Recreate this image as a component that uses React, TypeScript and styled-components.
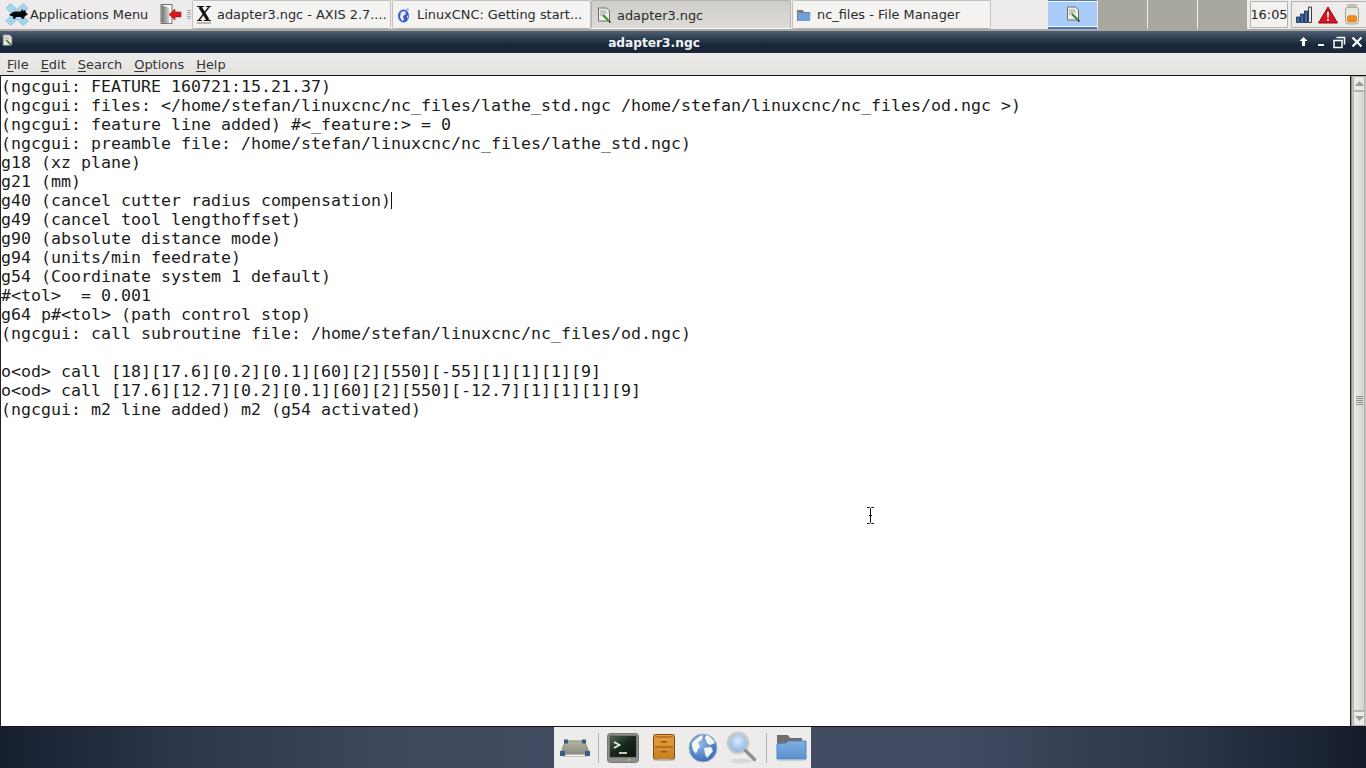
import React from 'react';
import styled, { createGlobalStyle } from 'styled-components';

const Global = createGlobalStyle`
  html, body { margin: 0; padding: 0; overflow: hidden; background: #1b2a40; }
  #root { width: 1366px; height: 768px; }
  * { box-sizing: border-box; }
`;
const Screen = styled.div`
  width: 1366px; height: 768px; display: flex; flex-direction: column;
  font-family: "DejaVu Sans", sans-serif; font-size: 12.9px; color: #2a2a2a;
`;
const Panel = styled.div`
  height: 31px; flex: none; display: flex; align-items: stretch; background: #edeceb;
  border-bottom: 2px solid #a9a8a2; padding-bottom: 1px;
`;
const AppMenu = styled.div`
  width: 157px; flex: none; display: flex; align-items: center; gap: 1px; padding-left: 5px;
`;
const Launcher = styled.div`
  width: 28px; flex: none; display: flex; align-items: center; justify-content: center;
`;
const Handle = styled.div`
  width: 7px; flex: none; display: flex; flex-direction: column; gap: 1px; justify-content: center; align-items: center;
  i { display: block; width: 4px; height: 1px; background: #a9a8a2; }
`;
const Task = styled.div<{ $w: number; $active?: boolean }>`
  width: ${p => p.$w}px; height: 29px; flex: none; display: flex; align-items: center; gap: 5px;
  padding-left: ${p => (p.$active ? 4 : 3)}px; padding-top: ${p => (p.$active ? 1 : 0)}px;
  border: 1px solid ${p => (p.$active ? '#b4b3ad' : '#c2c1bc')};
  border-bottom-color: ${p => (p.$active ? '#fff' : '#b4b3ad')};
  border-radius: 2px;
  background: ${p => (p.$active ? 'linear-gradient(#cfcecb, #dcdbd8)' : '#f4f3f2')};
  white-space: nowrap; overflow: hidden;
  svg { flex: none; }
`;
const Spacer = styled.div<{ $w: number }>` width: ${p => p.$w}px; flex: none; `;
const Pager = styled.div` display: flex; height: 29px; gap: 1px; flex: none; `;
const Desk = styled.div<{ $on?: boolean }>`
  width: 49px; height: 29px; display: flex; align-items: center; justify-content: center;
  background: ${p => (p.$on ? '#a8cbf8' : '#a9a8a0')};
  ${p => p.$on ? 'border-top: 1px solid #4a7bc0; border-bottom: 2px solid #3f76bf; box-shadow: inset 0 1px #fff, inset 0 -1px #fff;' : ''}
`;
const Clock = styled.div`
  width: 38px; height: 27px; margin: 1px 0 0 3px; flex: none; display: flex; align-items: center; justify-content: center;
  border: 1px solid #b4b3ad; background: #f2f1f0; color: #222;
`;
const Tray = styled.div`
  margin: 1px 0 0 3px; flex: 1; height: 27px; border: 1px solid #b4b3ad; border-right: 0;
  display: flex; align-items: center; gap: 6px; padding-left: 4px;
  svg { flex: none; }
`;
const TitleBar = styled.div`
  height: 22px; flex: none; position: relative; display: flex; align-items: center; justify-content: center;
  padding: 2px 58px 0 0;
  background: linear-gradient(#505f72 0, #2c3c50 35%, #1a273a 65%, #192639 100%);
  color: #f2f4f6; font-weight: bold; font-size: 12.2px;
`;
const TitleIcon = styled.div` position: absolute; left: 1px; top: 3px; `;
const WinButtons = styled.div`
  position: absolute; right: 0; top: 3px; display: flex; gap: 1px;
`;
const MenuBar = styled.div`
  height: 23px; flex: none; display: flex; align-items: center; gap: 12px; padding: 1px 0 0 7px;
  background: linear-gradient(#edecea, #e4e3df); border-bottom: 1px solid #111; color: #333;
  font-size: 12.95px;
  u { text-underline-offset: 2px; }
`;
const Body = styled.div`
  height: 651px; flex: none; display: flex; background: #e8e7e5; border-bottom: 1px solid #16161a;
`;
const Editor = styled.div`
  width: 1351px; background: #fff; border-right: 1px solid #222; border-left: 1px solid #222;
  position: relative; overflow: hidden; padding-top: 1px;
`;
const Line = styled.div`
  height: 19px; line-height: 19px; font-family: "DejaVu Sans Mono", monospace; font-size: 16.61px; color: #1c1c1c;
  white-space: pre; display: flex; align-items: center;
`;
const Caret = styled.span` display: inline-block; width: 1px; height: 17px; background: #111; `;
const Scrollbar = styled.div`
  flex: 1; display: flex; flex-direction: column; background: #c4c3bf; border-left: 1px solid #8f8e8a; padding: 0 1px;
`;
const ScrollArrow = styled.div`
  height: 15px; flex: none; background: #ecebe9; border: 1px solid #b3b2ad; display: flex; align-items: center; justify-content: center;
`;
const Thumb = styled.div`
  flex: 1; background: linear-gradient(90deg, #eeedeb, #d3d2ce); border: 1px solid #b3b2ad; display: flex; flex-direction: column; gap: 1px; align-items: center; justify-content: center; padding-bottom: 2px;
  i { display: block; width: 7px; height: 1px; background: #8f8e8a; }
`;
const Desktop = styled.div`
  flex: 1; display: flex; justify-content: center;
  background: linear-gradient(90deg, #161f30 0, #2b3549 12%, #3d485d 28%, #434e64 50%, #404b61 70%, #2a3448 88%, #141c2c 100%);
`;
const Dock = styled.div`
  width: 257px; margin-right: 1px; background: #edecea; display: flex; align-items: center; padding-left: 4px;
`;
const DockSep = styled.div<{ $ml: number; $mr: number }>`
  width: 1px; height: 30px; background: #b0afa9; margin: 0 ${p => p.$mr}px 0 ${p => p.$ml}px; flex: none;
`;
const DockItem = styled.div<{ $w: number }>`
  width: ${p => p.$w}px; height: 34px; flex: none; display: flex; align-items: center; justify-content: center;
`;
const Cursor = styled.svg` position: absolute; left: 865px; top: 431px; `;
const WinBtn = styled.svg` display: block; `;

const PadIcon = ({ s = 16 }: { s?: number }) => (
  <svg width={s} height={s} viewBox="0 0 16 16">
    <path d="M2.500 1h8l3 3v10h-11z" fill="#eeeeea" stroke="#6f6f6a" />
    <path d="M4 4h6M4 6h7M4 8h4" stroke="#a3a39d" />
    <path d="M7 8l5.500 5.500" stroke="#3f8a33" strokeWidth="2.200" />
    <path d="M13 14l1.500 1.500" stroke="#222" strokeWidth="1.500" />
  </svg>
);
const XfceIcon = () => (
  <svg width="24" height="25" viewBox="0 0 24 25">
    <path d="M1 6l4.500-4.500 6.500 6 6.500-6L23 6l-6 6.500 6 6.500-4.500 4.500-6.500-6-6.500 6L1 19l6-6.500z" fill="#a3d4f0" stroke="#7fb6d8" strokeWidth=".7" />
    <path d="M4 13c2-1 3-3.500 7-3.500h5l1-2.500 1.500 2 1.500-1 1 2.500 2 2-3 1.500-1.500 3-2-.5-.5-1.500h-5l-1 2-2-.5v-2l-3-1z" fill="#080808" />
  </svg>
);
const LogoutIcon = () => (
  <svg width="22" height="24" viewBox="0 0 22 24">
    <defs><linearGradient id="dr" x1="0" x2="1"><stop offset="0" stopColor="#6e6e6a" /><stop offset="1" stopColor="#d8d8d4" /></linearGradient></defs>
    <path d="M1 2.500h11v19H1z" fill="#fff" stroke="#6a6a66" />
    <path d="M1.500 3l8 3v15.500l-8-1z" fill="url(#dr)" />
    <path d="M21 10h-6V7l-6 5.500 6 5.500v-3h6z" fill="#d8161c" stroke="#8b1010" strokeWidth=".5" />
  </svg>
);
const XIcon = () => (
  <svg width="16" height="19" viewBox="0 0 16 19">
    <path d="M4 2l8 13" stroke="#111" strokeWidth="3.200" fill="none" />
    <path d="M13 2L3 15" stroke="#111" strokeWidth="1.300" fill="none" />
    <path d="M1 1.500h7M10 1.500h5M1 15.500h5M8 15.500h7" stroke="#111" strokeWidth="1.200" fill="none" />
    <path d="M1 18h14" stroke="#777" />
  </svg>
);
const GlobeIcon = ({ s = 16 }: { s?: number }) => (
  <svg width={s} height={s} viewBox="0 0 16 16">
    <ellipse cx="7.500" cy="9" rx="5.500" ry="6.500" fill="#3a5cc4" />
    <path d="M5 5l4-1 1 3-3 2 1 4-2 1-2-4zM11 9l1.500-1-1 4z" fill="#eef0fb" />
    <circle cx="11.500" cy="2.500" r="1.500" fill="#aab8e8" />
  </svg>
);
const FolderIcon = () => (
  <svg width="16" height="16" viewBox="0 0 16 16">
    <path d="M1 3h6l1 2h6v9H1z" fill="#7d7d7d" />
    <path d="M2 6h12.500l-.5 8H2z" fill="#6f9fd8" />
  </svg>
);

const lines = [
  '(ngcgui: FEATURE 160721:15.21.37)',
  '(ngcgui: files: </home/stefan/linuxcnc/nc_files/lathe_std.ngc /home/stefan/linuxcnc/nc_files/od.ngc >)',
  '(ngcgui: feature line added) #<_feature:> = 0',
  '(ngcgui: preamble file: /home/stefan/linuxcnc/nc_files/lathe_std.ngc)',
  'g18 (xz plane)',
  'g21 (mm)',
  'g40 (cancel cutter radius compensation)',
  'g49 (cancel tool lengthoffset)',
  'g90 (absolute distance mode)',
  'g94 (units/min feedrate)',
  'g54 (Coordinate system 1 default)',
  '#<tol>  = 0.001',
  'g64 p#<tol> (path control stop)',
  '(ngcgui: call subroutine file: /home/stefan/linuxcnc/nc_files/od.ngc)',
  ' ',
  'o<od> call [18][17.6][0.2][0.1][60][2][550][-55][1][1][1][9]',
  'o<od> call [17.6][12.7][0.2][0.1][60][2][550][-12.7][1][1][1][9]',
  '(ngcgui: m2 line added) m2 (g54 activated)',
];

export default function App() {
  return (
    <Screen>
      <Global />
      <Panel>
        <AppMenu><XfceIcon /><span>Applications Menu</span></AppMenu>
        <Launcher><LogoutIcon /></Launcher>
        <Handle><i /><i /><i /><i /><i /></Handle>
        <Task $w={199}><XIcon /><span>adapter3.ngc - AXIS 2.7....</span></Task>
        <Spacer $w={1} />
        <Task $w={199}><GlobeIcon /><span>LinuxCNC: Getting start...</span></Task>
        <Task $w={200} $active><PadIcon /><span>adapter3.ngc</span></Task>
        <Spacer $w={1} />
        <Task $w={199}><FolderIcon /><span>nc_files - File Manager</span></Task>
        <Spacer $w={57} />
        <Pager>
          <Desk $on><PadIcon /></Desk><Desk /><Desk /><Desk />
        </Pager>
        <Clock>16:05</Clock>
        <Tray>
          <svg width="16" height="17" viewBox="0 0 16 17">
            <path d="M.5 11h3v5.500h-3zM4.500 8h3v8.500h-3zM8.500 5h3v11.500h-3z" fill="#3e6db5" stroke="#10203a" strokeWidth=".8" />
            <path d="M12.500 1h3v15.500h-3z" fill="#e8e8e8" stroke="#111" strokeWidth=".8" />
          </svg>
          <svg width="20" height="18" viewBox="0 0 20 18">
            <path d="M10 1l9.500 16H.5z" fill="#d8141e" stroke="#8c0d12" strokeLinejoin="round" />
            <path d="M9 6h2l-.4 6h-1.200zM9 13h2v2H9z" fill="#fff" />
          </svg>
          <svg width="16" height="21" viewBox="0 0 16 21">
            <rect x="1.500" y="3" width="13" height="17" rx="3" fill="#e8e8e2" stroke="#a5a59e" />
            <path d="M4 .5h8v3H4z" fill="#c8c8c2" stroke="#a5a59e" strokeWidth=".6" />
            <path d="M3 12c3-1.500 7-1.500 10 0v4.500q0 2-2 2H5q-2 0-2-2z" fill="#ec8a2c" />
          </svg>
        </Tray>
      </Panel>
      <TitleBar>
        <TitleIcon><PadIcon s={13} /></TitleIcon>
        adapter3.ngc
        <WinButtons>
          <WinBtn width="17" height="17" viewBox="0 0 17 17"><path d="M8.500 3l4 4h-2.500v5H7V7H4.500z" fill="#fff" /></WinBtn>
          <WinBtn width="17" height="17" viewBox="0 0 17 17"><path d="M5 10h6v2H5z" fill="#fff" /></WinBtn>
          <WinBtn width="17" height="17" viewBox="0 0 17 17"><path d="M5.500 3.500h8v7M3 6.500h8v7H3z" fill="none" stroke="#fff" strokeWidth="1.500" /></WinBtn>
          <WinBtn width="17" height="17" viewBox="0 0 17 17"><path d="M3.500 3.500l9 9M12.500 3.500l-9 9" stroke="#fff" strokeWidth="2.200" /></WinBtn>
        </WinButtons>
      </TitleBar>
      <MenuBar>
        <span><u>F</u>ile</span><span><u>E</u>dit</span><span><u>S</u>earch</span><span><u>O</u>ptions</span><span><u>H</u>elp</span>
      </MenuBar>
      <Body>
        <Editor>
          {lines.map((l, i) => (
            <Line key={i}>{l}{i === 6 && <Caret />}</Line>
          ))}
          <Cursor width="9" height="17" viewBox="0 0 9 17">
            <path d="M1 .5h2.500l1 1 1-1H8M4.500 1.500v14M1 16.500h2.500l1-1 1 1H8M3 8.500h3" fill="none" stroke="#111" />
          </Cursor>
        </Editor>
        <Scrollbar>
          <ScrollArrow><svg width="9" height="6"><path d="M4.500 0L9 5H0z" fill="#9a9994" /></svg></ScrollArrow>
          <Thumb><i /><i /><i /><i /><i /></Thumb>
          <ScrollArrow><svg width="9" height="6"><path d="M0 0h9L4.500 5z" fill="#9a9994" /></svg></ScrollArrow>
        </Scrollbar>
      </Body>
      <Desktop>
        <Dock>
          <DockItem $w={34}>
            <svg width="32" height="18" viewBox="0 0 32 18">
              <defs><linearGradient id="tp" x1="0" y1="0" x2="0" y2="1"><stop offset="0" stopColor="#b4b5a4" /><stop offset="1" stopColor="#8d8e80" /></linearGradient></defs>
              <path d="M6.500 2h19l5 13H1.500z" fill="url(#tp)" stroke="#8a8a78" />
              <path d="M5 .5h4v4H5zM23 .5h4v4h-4zM1 12h5v5H1zM26 12h5v5h-5z" fill="#3e5a8a" />
              <path d="M4 17.500h24" stroke="#c8c8c2" />
            </svg>
          </DockItem>
          <DockSep $ml={6} $mr={7} />
          <DockItem $w={34}>
            <svg width="32" height="30" viewBox="0 0 32 30">
              <defs><linearGradient id="sc" x1="0" y1="0" x2="1" y2="1"><stop offset="0" stopColor="#56695a" /><stop offset=".45" stopColor="#1a2a1c" /><stop offset="1" stopColor="#0c140d" /></linearGradient></defs>
              <rect x=".5" y=".5" width="31" height="29" rx="3" fill="#8f918b" stroke="#777" />
              <rect x="3" y="3" width="26" height="21" fill="url(#sc)" stroke="#333" strokeWidth=".6" />
              <path d="M7 9l5.500 3L7 15" fill="none" stroke="#eef8e8" strokeWidth="1.600" />
              <path d="M12 20h8" stroke="#eef8e8" strokeWidth="1.600" />
              <circle cx="22" cy="27" r="1" fill="#9be070" />
            </svg>
          </DockItem>
          <DockItem $w={48}>
            <svg width="24" height="27" viewBox="0 0 24 27">
              <defs><linearGradient id="cb" x1="0" y1="0" x2="0" y2="1"><stop offset="0" stopColor="#e7a13f" /><stop offset="1" stopColor="#c97e1f" /></linearGradient></defs>
              <rect x="1.500" y=".5" width="21" height="25" rx="2" fill="url(#cb)" stroke="#7a4c10" />
              <path d="M3 13h18M3 3h18" stroke="#8a5510" />
              <path d="M9 7h6v1.500H9zM9 17h6v1.500H9z" fill="#8a5510" />
              <ellipse cx="12" cy="26" rx="11" ry="1" fill="#bdbcb8" />
            </svg>
          </DockItem>
          <DockItem $w={30}>
            <svg width="30" height="30" viewBox="0 0 30 30">
              <defs><radialGradient id="gl" cx=".4" cy=".35" r=".75"><stop offset="0" stopColor="#8fb8ea" /><stop offset="1" stopColor="#2f63ae" /></radialGradient></defs>
              <circle cx="15" cy="15" r="14" fill="url(#gl)" stroke="#a0b4cc" />
              <path d="M4 10c3-4 7-7 11-8l-1 5-4 2 2 5-2 2-2 5-3-4-1-4zM18 2c4 1 7 4 9 8l-5 2-3-2-2-5zM16 15l7-1 2 4-6 7-2-4z" fill="#f3f5f7" />
            </svg>
          </DockItem>
          <DockItem $w={48}>
            <svg width="32" height="33" viewBox="0 0 32 33">
              <defs><radialGradient id="ln" cx=".5" cy=".4" r=".6"><stop offset="0" stopColor="#dcebfa" /><stop offset="1" stopColor="#86b0e2" /></radialGradient></defs>
              <ellipse cx="15" cy="30" rx="11" ry="2.500" fill="#dad9d6" />
              <circle cx="12" cy="12" r="10" fill="url(#ln)" stroke="#c6c9c8" strokeWidth="2.500" />
              <path d="M19.500 19.500l9 9" stroke="#8e908c" strokeWidth="3.500" strokeLinecap="round" />
            </svg>
          </DockItem>
          <DockSep $ml={0} $mr={8} />
          <DockItem $w={32}>
            <svg width="31" height="27" viewBox="0 0 31 27">
              <defs><linearGradient id="fd" x1="0" y1="0" x2="0" y2="1"><stop offset="0" stopColor="#7fafe2" /><stop offset="1" stopColor="#5c8fcc" /></linearGradient></defs>
              <path d="M1 1h11l2 3h12v8H1z" fill="#6d6d6e" />
              <path d="M1 10l9-1 2-2h18v18H1z" fill="url(#fd)" stroke="#5585be" />
              <path d="M2 26.500h27" stroke="#cfcecb" />
            </svg>
          </DockItem>
        </Dock>
      </Desktop>
    </Screen>
  );
}
